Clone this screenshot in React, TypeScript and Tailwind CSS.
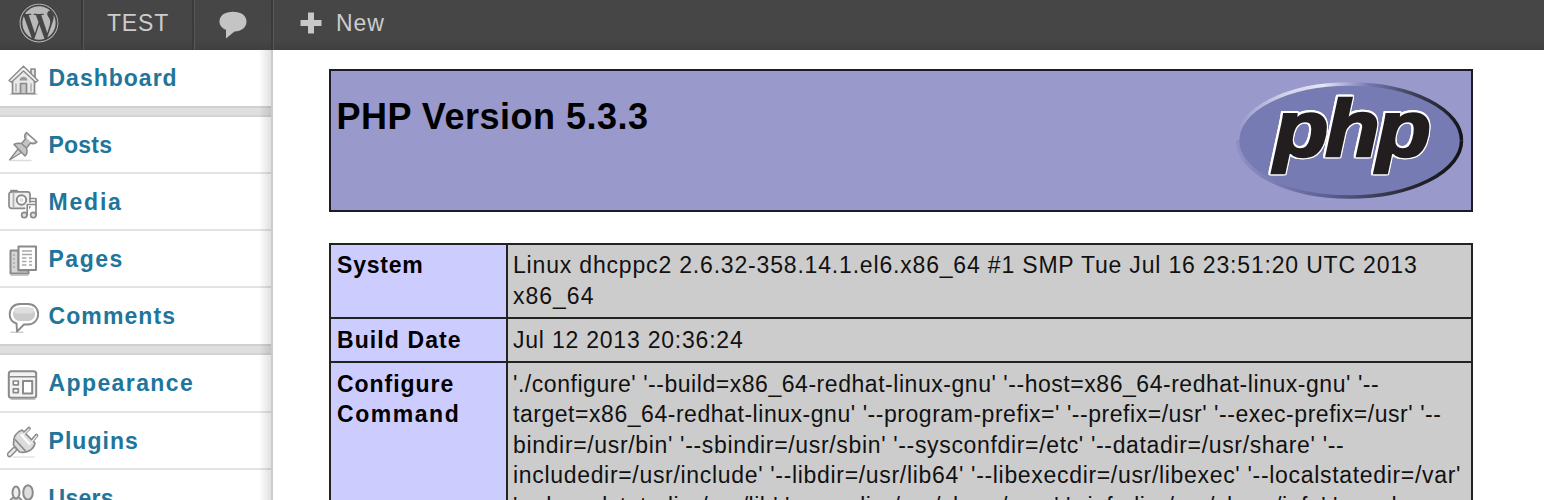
import type { ReactNode } from "react";
import { FaWordpress } from "react-icons/fa";

function Icon({ children }: { children: ReactNode }) {
  return (
    <svg
      viewBox="0 0 32 32"
      className="mt-[13px] ml-[7px] h-8 w-8 shrink-0"
      fill="none"
      stroke="#8a8a8a"
      strokeWidth="1.7"
      strokeLinejoin="round"
      strokeLinecap="round"
    >
      {children}
    </svg>
  );
}

const house = (
  <Icon>
    <path d="M3 31.2H30" stroke="#c4c4c4" strokeWidth="1.2" />
    <path d="M24 11V6h4v9" fill="#e4e4e4" />
    <path d="M5.5 17v13.5h22V17L16.5 6z" fill="#e9e9e9" />
    <path d="M2 17.5 16.5 3.2 31 17.5l-2.4 1.8L16.5 8 4.4 19.3z" fill="#f4f4f4" strokeWidth="1.4" />
    <path d="M12.5 17.5c0-5 8-5 8 0z" fill="#999" stroke="none" />
    <path d="M13.5 30V20.5h6V30" fill="#c8c8c8" />
    <path d="M9 21v7M24 21v7" stroke="#b5b5b5" />
  </Icon>
);

const pin = (
  <Icon>
    <path d="M4 30.5h20" stroke="#dcdcdc" strokeWidth="1.4" />
    <path d="M2.5 30 11 19l3.500 3.500z" fill="#d6d6d6" strokeWidth="1.300" />
    <path d="M7 14.500c2.500-1.500 5-1.500 7.500-1l4-4.500c-1.200-2-1.200-4.500 1-6.500l10.500 9.500c-2 2-4.500 2-6.500 1L19.500 18c1 3 .5 6-1.500 8z" fill="#c4c4c4" strokeWidth="1.500" />
    <path d="M20.500 5 28 11.500 24 12 19.700 8z" fill="#fff" stroke="none" />
    <path d="m15 14 4 3.500" strokeWidth="1.300" />
  </Icon>
);

const media = (
  <Icon>
    <path d="M4 5V3.500h6V5" />
    <rect x="2" y="4.800" width="21" height="16.500" rx="2.500" fill="#efefef" />
    <path d="M6.500 6v14" stroke="#b0b0b0" />
    <circle cx="14.500" cy="13" r="4.700" fill="#fff" strokeWidth="2" />
    <circle cx="14.500" cy="13" r="2" fill="#ddd" stroke="none" />
    <path d="M20.200 28V17.500h8.800V28" stroke="#fff" strokeWidth="3.600" />
    <path d="M20.200 28V17.500H29M29 28V11.500h-5.500M24 14.500h5" />
    <circle cx="17.300" cy="28" r="2.700" fill="#e0e0e0" />
    <circle cx="26.300" cy="28" r="2.700" fill="#e0e0e0" />
  </Icon>
);

const pages = (
  <Icon>
    <path d="M4 31.300h17" stroke="#c8c8c8" strokeWidth="1.200" />
    <path d="M3.500 6.500h8v20h10v3h-18z" fill="#d5d5d5" strokeWidth="2" />
    <rect x="11.500" y="2.500" width="17.500" height="23.500" fill="#fff" strokeWidth="2" />
    <path d="M15 7h10M15 10.500h10M15 14h4.500M22 14h3M15 17.500h4.500M22 17.500h3M15 21h4.500M22 21h3M6 11h2M6 15h2M6 19h2M6 23h2" stroke="#a8a8a8" strokeWidth="1.300" strokeLinecap="butt" />
  </Icon>
);

const bubble = (
  <Icon>
    <path d="M4 31.300h12" stroke="#d0d0d0" strokeWidth="1.400" />
    <path d="M9.500 22.500C5 21 2.700 17.500 2.700 13.500c0-6 4-10.500 10.300-10.500h8c6 0 10.200 4.500 10.200 10s-4.200 10.500-10.200 10.500h-4L10 30.500z" fill="#fff" strokeWidth="1.900" />
    <rect x="6" y="6.500" width="22" height="13.500" rx="6.700" fill="#cbcbcb" stroke="none" />
    <rect x="7" y="6.500" width="20" height="6" rx="3" fill="#dedede" stroke="none" />
  </Icon>
);

const appearance = (
  <Icon>
    <path d="M4 31.500h24" stroke="#c4c4c4" strokeWidth="1.200" />
    <rect x="1.800" y="3.300" width="27.400" height="26.500" rx="2.500" fill="#f3f3f3" strokeWidth="2" />
    <path d="M3 8.800h25" strokeWidth="1.500" />
    <rect x="6.300" y="13" width="5" height="3.800" fill="#fff" />
    <rect x="6.300" y="20.800" width="5" height="3.800" fill="#fff" />
    <rect x="16" y="13" width="9.200" height="12.500" fill="#fff" strokeWidth="2" />
  </Icon>
);

const plug = (
  <Icon>
    <path d="M6 31h21" stroke="#d8d8d8" strokeWidth="1.200" />
    <path d="M2.500 28.500 7.500 23.500" strokeWidth="5.500" />
    <path d="M2.500 28.500 7.500 23.500" stroke="#e9e9e9" strokeWidth="2.500" />
    <path d="m16 8.500 6-6M24 16l5.500-6.500" strokeWidth="3.600" />
    <path d="M15 4c-6 2-9 7.500-8.500 15l6 7c7 1.200 14-1.500 15.500-9z" fill="#dcdcdc" />
    <path d="m16 9 6-6M24 16.500l5.500-6.500" stroke="#f0f0f0" strokeWidth="1.200" />
    <path d="m8.500 14 9.500 10.500" />
    <path d="m14.500 9 8 9" stroke="#fff" strokeWidth="2.200" />
  </Icon>
);

const people = (
  <Icon>
    <path d="M13 31c0-8 3-11 7.500-11s7.500 3 7.500 11" fill="#dedede" />
    <ellipse cx="21" cy="9.500" rx="4.800" ry="7.200" fill="#dedede" strokeWidth="2" />
    <path d="M1.500 26c0-8 3-12 7.500-12s7.500 4 7.500 12" fill="#d0d0d0" />
    <ellipse cx="9" cy="9.500" rx="3.500" ry="6" fill="#eee" strokeWidth="2" />
  </Icon>
);

type Item = { label: string; icon: ReactNode; spacing: string; box: string };

const groups: Item[][] = [
  [{ label: "Dashboard", icon: house, spacing: "tracking-[1px]", box: "h-[56px]" }],
  [
    { label: "Posts", icon: pin, spacing: "tracking-[0.200px]", box: "h-[57px] border-b-2" },
    { label: "Media", icon: media, spacing: "tracking-[1.800px]", box: "h-[57px] border-b-2" },
    { label: "Pages", icon: pages, spacing: "tracking-[1.500px]", box: "h-[57px] border-b-2" },
    { label: "Comments", icon: bubble, spacing: "tracking-[1.100px]", box: "h-[56px]" },
  ],
  [
    { label: "Appearance", icon: appearance, spacing: "tracking-[1.400px]", box: "h-[58px] border-b-2" },
    { label: "Plugins", icon: plug, spacing: "tracking-[1.050px]", box: "h-[57px] border-b-2" },
    { label: "Users", icon: people, spacing: "tracking-[0.300px]", box: "h-[57px]" },
  ],
];

function Sidebar() {
  return (
    <nav className="relative h-[450px] w-[273px] shrink-0 overflow-hidden border-r-2 border-[#cccccc]">
      {groups.map((items, i) => (
        <div key={i}>
          {i > 0 && <div className="h-[11px] border-y-2 border-t-[#d0d0d0] border-b-[#d3d3d3] bg-[#dfdfdf]" />}
          {items.map((it) => (
            <div key={it.label} className={`flex items-start border-[#e3e3e3] ${it.box}`}>
              {it.icon}
              <span className={`mt-[13px] ml-[9.500px] text-[23px] leading-[30px] font-bold text-[#21759b] ${it.spacing}`}>
                {it.label}
              </span>
            </div>
          ))}
        </div>
      ))}
      <div className="absolute inset-y-0 right-0 w-3 bg-linear-to-r from-transparent to-black/12" />
    </nav>
  );
}

function AdminBar() {
  return (
    <header className="flex h-[50px] bg-linear-to-b from-[#464646] from-80% to-[#3f3f3f] text-[23px] leading-[30px] text-[#cccccc]">
      <div className="flex w-[83px] items-start border-r-2 border-[#3a3a3a] pt-[3px] pl-[18.500px]">
        <FaWordpress className="h-10 w-10 text-[#b9b9b9]" />
      </div>
      <div className="w-[111px] border-r-2 border-l border-r-[#3a3a3a] border-l-[#585858] pt-2 pl-[23px] tracking-[0.800px]">TEST</div>
      <div className="w-[79px] border-r-2 border-l border-r-[#3a3a3a] border-l-[#585858] pt-[11px] pl-[24px]">
        <svg viewBox="0 0 28 28" className="h-7 w-7">
          <path d="M14 .800c8 0 13.500 3.700 13.500 9.700s-5 9.800-12 10L7 27.500V18.800C3 17.300.500 14.300.500 10.500.500 4.500 6 .800 14 .800z" fill="#c4c4c4" />
        </svg>
      </div>
      <div className="flex border-l border-[#585858] pl-[26px]">
        <svg viewBox="0 0 22 22" className="mt-[12px] h-[22px] w-[22px]">
          <path d="M8 .500h6v7.500h7.500v6H14v7.500H8V14H.500V8H8z" fill="#c8c8c8" />
        </svg>
        <span className="mt-2 ml-[14px] tracking-[0.900px]">New</span>
      </div>
    </header>
  );
}

function PhpLogo() {
  return (
    <svg viewBox="0 0 230 120" className="mt-[9px] mr-[6px] h-[120px] w-[230px]">
      <defs>
        <linearGradient id="rimTop" gradientUnits="userSpaceOnUse" x1="3" y1="0" x2="227" y2="0">
          <stop offset="0" stopColor="#9999cc" />
          <stop offset="0.200" stopColor="#d0d0ea" />
          <stop offset="0.380" stopColor="#e6e6f6" />
          <stop offset="0.580" stopColor="#777bb3" />
          <stop offset="0.800" stopColor="#3c3c54" />
          <stop offset="1" stopColor="#141418" />
        </linearGradient>
        <linearGradient id="rimLow" gradientUnits="userSpaceOnUse" x1="3" y1="0" x2="227" y2="0">
          <stop offset="0" stopColor="#8f91c4" />
          <stop offset="0.400" stopColor="#5c5f92" />
          <stop offset="0.800" stopColor="#222228" />
          <stop offset="1" stopColor="#141418" />
        </linearGradient>
      </defs>
      <ellipse cx="114.500" cy="60.500" rx="112" ry="56.500" fill="#777bb3" />
      <path d="M2.500 60.500a112 56.500 0 0 1 224 0" fill="none" stroke="url(#rimTop)" strokeWidth="3.500" />
      <path d="M2.500 60.500a112 56.500 0 0 0 224 0" fill="none" stroke="url(#rimLow)" strokeWidth="3.500" />
      <g className="[filter:drop-shadow(1.200px_0_0_white)_drop-shadow(-1.200px_0_0_white)_drop-shadow(0_1.200px_0_white)_drop-shadow(0_-1.200px_0_white)]">
        <text
          x="34.800 80.600 126.400"
          y="76.500"
          transform="scale(1.120 1)"
          className="fill-[#221e1f] stroke-[#221e1f] stroke-[2.500px] font-['Liberation_Sans',sans-serif] text-[79.500px] font-bold italic"
        >
          php
        </text>
      </g>
    </svg>
  );
}

type Row = { name: [string, string][]; value: [string, string][]; box: string };

const rows: Row[] = [
  {
    name: [["System", "tracking-[0.800px]"]],
    value: [
      ["Linux dhcppc2 2.6.32-358.14.1.el6.x86_64 #1 SMP Tue Jul 16 23:51:20 UTC 2013", "tracking-[0.820px]"],
      ["x86_64", "tracking-[1px]"],
    ],
    box: "h-[74px] *:pt-[5px]",
  },
  {
    name: [["Build Date", "tracking-[1.100px]"]],
    value: [["Jul 12 2013 20:36:24", "tracking-[0.780px]"]],
    box: "h-[44px] *:pt-[5.500px]",
  },
  {
    name: [
      ["Configure", "tracking-[0.950px]"],
      ["Command", "tracking-[1.550px]"],
    ],
    value: [
      ["'./configure' '--build=x86_64-redhat-linux-gnu' '--host=x86_64-redhat-linux-gnu' '--", "tracking-[0.540px]"],
      ["target=x86_64-redhat-linux-gnu' '--program-prefix=' '--prefix=/usr' '--exec-prefix=/usr' '--", "tracking-[0.540px]"],
      ["bindir=/usr/bin' '--sbindir=/usr/sbin' '--sysconfdir=/etc' '--datadir=/usr/share' '--", "tracking-[0.660px]"],
      ["includedir=/usr/include' '--libdir=/usr/lib64' '--libexecdir=/usr/libexec' '--localstatedir=/var'", "tracking-[0.680px]"],
      ["'--sharedstatedir=/var/lib' '--mandir=/usr/share/man' '--infodir=/usr/share/info' '--cache-", "tracking-[0.520px]"],
    ],
    box: "h-[180px] *:pt-[5.500px]",
  },
];

function Lines({ lines }: { lines: [string, string][] }) {
  return lines.map(([text, spacing]) => (
    <div key={text} className={`h-[30.500px] whitespace-pre ${spacing}`}>
      {text}
    </div>
  ));
}

function PhpInfo() {
  return (
    <main className="h-[450px] overflow-hidden pt-[19px] pl-14">
      <section className="flex h-[143px] w-[1144px] justify-between border-2 border-[#1c1c26] bg-[#9999cc]">
        <h1 className="mt-[26px] ml-[5.500px] text-[36px] leading-[40px] font-bold tracking-[0.500px] text-black">PHP Version 5.3.3</h1>
        <PhpLogo />
      </section>
      <section className="mt-[31px] w-[1144px] border-2 border-[#222222] text-[23px] leading-[30.500px] text-black">
        {rows.map((r) => (
          <div key={r.name[0][0]} className={`flex border-b-2 border-[#222222] ${r.box}`}>
            <div className="w-[177px] shrink-0 border-r-2 border-[#222222] bg-[#ccccff] pl-[6px] font-bold">
              <Lines lines={r.name} />
            </div>
            <div className="grow bg-[#cccccc] pl-[5px] text-[#111111]">
              <Lines lines={r.value} />
            </div>
          </div>
        ))}
      </section>
    </main>
  );
}

export default function App() {
  return (
    <div className="h-[500px] w-[1544px] overflow-hidden bg-white font-['Liberation_Sans',Arial,sans-serif]">
      <AdminBar />
      <div className="flex">
        <Sidebar />
        <PhpInfo />
      </div>
    </div>
  );
}
